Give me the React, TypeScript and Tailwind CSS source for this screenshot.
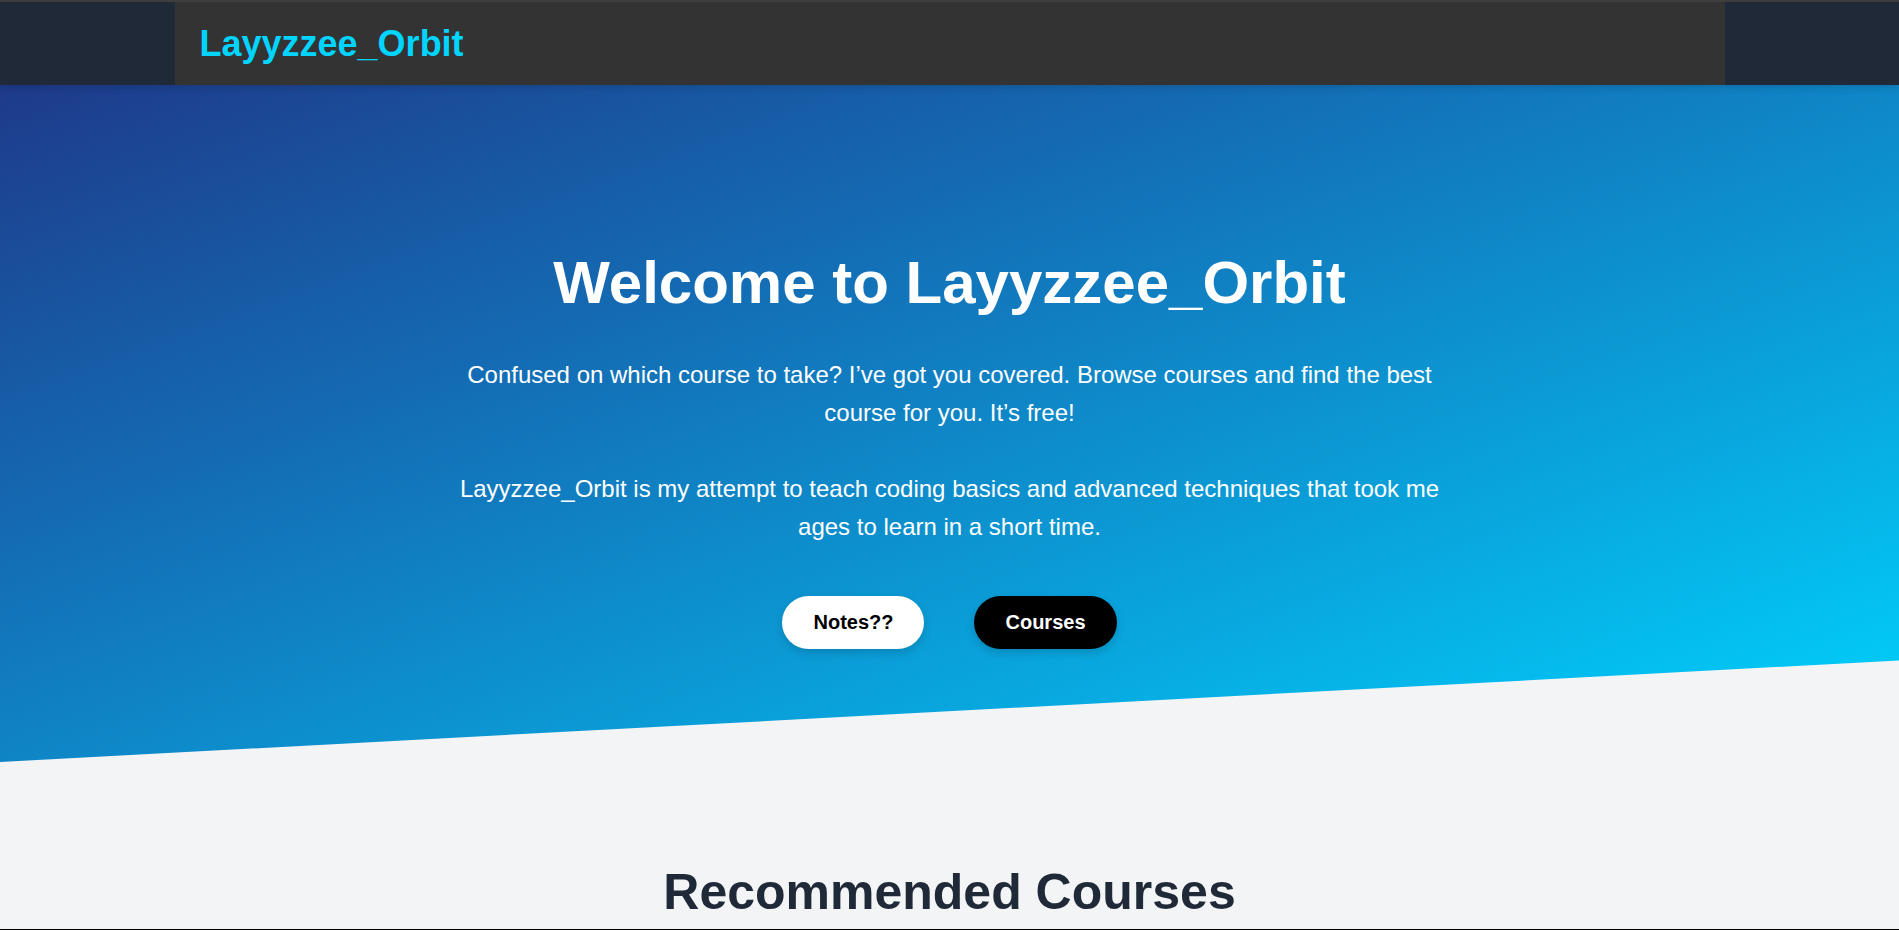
function Header() {
  return (
    <header className="relative z-10 border-t-2 border-[#3e3e3e] bg-[#1f2937] shadow-[0_2px_8px_rgba(0,0,0,0.15)]">
      <div className="mx-auto flex max-w-[1550px] items-center bg-[#333333] px-[25px] py-5">
        <a href="#" className="text-4xl leading-[43px] font-bold text-[#00d4ff]">
          Layyzzee_Orbit
        </a>
      </div>
    </header>
  );
}

function Hero() {
  return (
    <section className="flex flex-col items-center bg-[linear-gradient(160deg,#1e3a8a_0%,#146bb3_33%,#00d4ff_100%)] px-5 pt-40 pb-[113px] text-center text-white [clip-path:polygon(0_0,100%_0,100%_85%,0_100%)]">
      <h1 className="mb-9 text-6xl leading-[75px] font-bold">Welcome to Layyzzee_Orbit</h1>
      <p className="max-w-[1000px] text-2xl leading-[38px]">
        Confused on which course to take? I’ve got you covered. Browse courses and find the best
        course for you. It’s free!
        <br />
        <br />
        Layyzzee_Orbit is my attempt to teach coding basics and advanced techniques that took me
        ages to learn in a short time.
      </p>
      <div className="mt-[50px] flex flex-wrap justify-center gap-[50px]">
        <button className="rounded-full bg-white px-[31px] py-3 text-xl leading-[29px] font-bold text-black shadow-[0_4px_8px_rgba(0,0,0,0.15)]">
          Notes??
        </button>
        <button className="rounded-full bg-black px-[31px] py-3 text-xl leading-[29px] font-bold text-white shadow-[0_4px_8px_rgba(0,0,0,0.15)]">
          Courses
        </button>
      </div>
    </section>
  );
}

export default function App() {
  return (
    <div className="flex h-screen flex-col overflow-hidden border-b border-black bg-[#f3f4f6] font-['Liberation_Sans',Arial,sans-serif]">
      <Header />
      <main>
        <Hero />
        <section className="px-5 py-[100px] text-center">
          <h2 className="text-[50px] leading-[60px] font-bold text-[#1f2937]">Recommended Courses</h2>
        </section>
      </main>
    </div>
  );
}
